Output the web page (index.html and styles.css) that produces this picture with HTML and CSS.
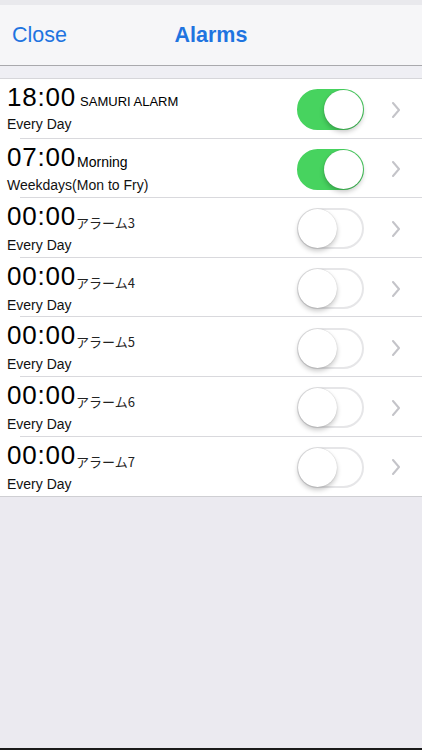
FILE: index.html
```html
<!DOCTYPE html>
<html lang="en">
<head>
<meta charset="utf-8">
<title>Alarms</title>
<link rel="stylesheet" href="styles.css">
</head>
<body>
<div class="screen">
  <header class="nav">
    <span class="nav-btn">Close</span>
    <span class="nav-title">Alarms</span>
    <span class="nav-spacer"></span>
  </header>
  <div class="gap-band"></div>
  <ul class="list">
    <li class="row">
      <div class="text">
        <div class="line1"><span class="time">18:00</span><span class="name spaced">SAMURI ALARM</span></div>
        <div class="sub">Every Day</div>
      </div>
      <span class="toggle on"><span class="knob"></span></span>
      <svg class="chev" viewBox="0 0 8 16" width="8" height="16"><path d="M1 1 L7 8 L1 15" fill="none" stroke="#c4c4c9" stroke-width="2" stroke-linecap="round" stroke-linejoin="round"/></svg>
    </li>
    <li class="row">
      <div class="text">
        <div class="line1"><span class="time">07:00</span><span class="name">Morning</span></div>
        <div class="sub">Weekdays(Mon to Fry)</div>
      </div>
      <span class="toggle on"><span class="knob"></span></span>
      <svg class="chev" viewBox="0 0 8 16" width="8" height="16"><path d="M1 1 L7 8 L1 15" fill="none" stroke="#c4c4c9" stroke-width="2" stroke-linecap="round" stroke-linejoin="round"/></svg>
    </li>
    <li class="row">
      <div class="text">
        <div class="line1"><span class="time">00:00</span><span class="name jp">アラーム3</span></div>
        <div class="sub">Every Day</div>
      </div>
      <span class="toggle"><span class="knob"></span></span>
      <svg class="chev" viewBox="0 0 8 16" width="8" height="16"><path d="M1 1 L7 8 L1 15" fill="none" stroke="#c4c4c9" stroke-width="2" stroke-linecap="round" stroke-linejoin="round"/></svg>
    </li>
    <li class="row">
      <div class="text">
        <div class="line1"><span class="time">00:00</span><span class="name jp">アラーム4</span></div>
        <div class="sub">Every Day</div>
      </div>
      <span class="toggle"><span class="knob"></span></span>
      <svg class="chev" viewBox="0 0 8 16" width="8" height="16"><path d="M1 1 L7 8 L1 15" fill="none" stroke="#c4c4c9" stroke-width="2" stroke-linecap="round" stroke-linejoin="round"/></svg>
    </li>
    <li class="row">
      <div class="text">
        <div class="line1"><span class="time">00:00</span><span class="name jp">アラーム5</span></div>
        <div class="sub">Every Day</div>
      </div>
      <span class="toggle"><span class="knob"></span></span>
      <svg class="chev" viewBox="0 0 8 16" width="8" height="16"><path d="M1 1 L7 8 L1 15" fill="none" stroke="#c4c4c9" stroke-width="2" stroke-linecap="round" stroke-linejoin="round"/></svg>
    </li>
    <li class="row">
      <div class="text">
        <div class="line1"><span class="time">00:00</span><span class="name jp">アラーム6</span></div>
        <div class="sub">Every Day</div>
      </div>
      <span class="toggle"><span class="knob"></span></span>
      <svg class="chev" viewBox="0 0 8 16" width="8" height="16"><path d="M1 1 L7 8 L1 15" fill="none" stroke="#c4c4c9" stroke-width="2" stroke-linecap="round" stroke-linejoin="round"/></svg>
    </li>
    <li class="row last">
      <div class="text">
        <div class="line1"><span class="time">00:00</span><span class="name jp">アラーム7</span></div>
        <div class="sub">Every Day</div>
      </div>
      <span class="toggle"><span class="knob"></span></span>
      <svg class="chev" viewBox="0 0 8 16" width="8" height="16"><path d="M1 1 L7 8 L1 15" fill="none" stroke="#c4c4c9" stroke-width="2" stroke-linecap="round" stroke-linejoin="round"/></svg>
    </li>
  </ul>
  <div class="fill"></div>
</div>
</body>
</html>
```

FILE: styles.css
```css
* { box-sizing: border-box; }
html, body {
  margin: 0;
  padding: 0;
  height: 100%;
}
body {
  font-family: "Liberation Sans", Arial, "Noto Sans CJK JP", sans-serif;
  background: #ebeaf0;
  color: #000;
}
.screen {
  width: 422px;
  height: 750px;
  display: flex;
  flex-direction: column;
  background: #ebeaf0;
  border-bottom: 2px solid #1a1a1a;
}
.nav {
  height: 66px;
  padding-top: 5px;
  background: linear-gradient(#e9e9ed 0, #e9e9ed 5px, #f6f6f8 5px);
  border-bottom: 1px solid #a9a9ad;
  display: flex;
  align-items: center;
  padding-left: 12px;
  padding-right: 12px;
}
.nav-btn {
  flex: 1;
  font-size: 21.5px;
  color: #1f74e0;
}
.nav-title {
  font-size: 21.5px;
  font-weight: bold;
  color: #1f74e0;
}
.nav-spacer { flex: 1; }
.gap-band {
  height: 13px;
  background: #efeff4;
  border-bottom: 1px solid #d6d6da;
}
.list {
  list-style: none;
  margin: 0;
  padding: 0;
  background: #fff;
  border-bottom: 1px solid #cfcfd3;
}
.row {
  height: 59.6px;
  display: flex;
  align-items: center;
  padding-left: 7px;
  padding-right: 22px;
  background: linear-gradient(#d9d9dd, #d9d9dd) no-repeat 20px 100% / 100% 1px;
  background-color: #fff;
}
.row.last { background-image: none; }
.text {
  flex: 1;
  align-self: flex-start;
  padding-top: 4px;
}
.line1 {
  line-height: 29px;
  white-space: nowrap;
}
.time {
  font-size: 26px;
  letter-spacing: 0.8px;
}
.name {
  font-size: 14px;
  margin-left: 1px;
  vertical-align: -1px;
}
.name.spaced { margin-left: 4px; vertical-align: 0; font-size: 13px; }
.name.jp {
  font-family: "Noto Sans CJK JP", sans-serif;
  font-size: 13px;
  color: #222;
  vertical-align: -3px;
  margin-left: 0;
}
.sub {
  font-size: 14px;
  line-height: 17px;
  color: #111;
}
.toggle {
  width: 67px;
  height: 41px;
  border-radius: 21px;
  border: 2px solid #e6e6e8;
  background: #fff;
  display: flex;
  align-items: center;
  justify-content: flex-start;
  margin-top: 2px;
}
.toggle .knob {
  width: 39px;
  height: 39px;
  border-radius: 50%;
  background: #fff;
  margin-left: -1px;
  box-shadow: 0 3px 5px rgba(0,0,0,0.22), 0 0 1px rgba(0,0,0,0.25);
}
.toggle.on {
  background: #47d35f;
  border-color: #47d35f;
  justify-content: flex-end;
}
.toggle.on .knob {
  margin-left: 0;
  margin-right: -1px;
}
.chev {
  margin-left: 28px;
  margin-top: 2px;
}
.fill { flex: 1; }
```
